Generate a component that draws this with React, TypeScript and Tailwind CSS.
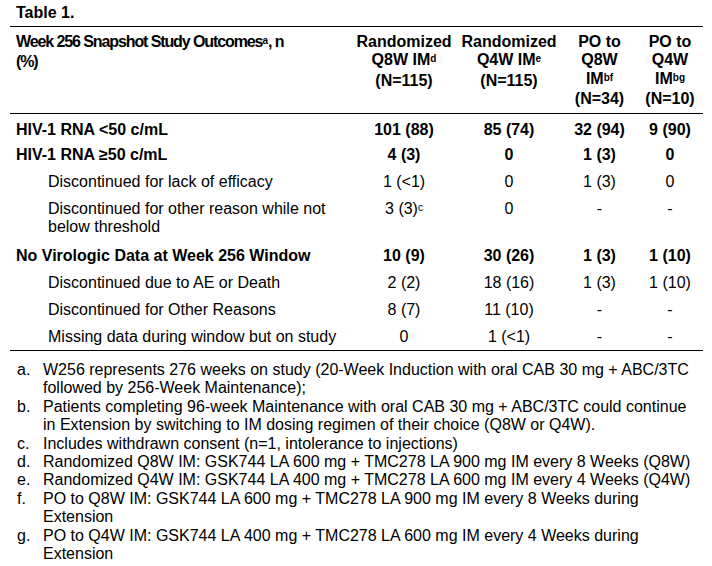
const headCols = [
  { lines: ["Randomized", "Q8W IM"], sup: "d", n: "(N=115)" },
  { lines: ["Randomized", "Q4W IM"], sup: "e", n: "(N=115)" },
  { lines: ["PO to", "Q8W", "IM"], sup: "bf", n: "(N=34)" },
  { lines: ["PO to", "Q4W", "IM"], sup: "bg", n: "(N=10)" },
];

type Row = {
  label: React.ReactNode;
  values: React.ReactNode[];
  bold?: boolean;
  indent?: boolean;
  pt: string;
};

const rows: Row[] = [
  { label: "HIV-1 RNA <50 c/mL", values: ["101 (88)", "85 (74)", "32 (94)", "9 (90)"], bold: true, pt: "pt-[7px]" },
  { label: "HIV-1 RNA \u226550 c/mL", values: ["4 (3)", "0", "1 (3)", "0"], bold: true, pt: "pt-[7.4px]" },
  { label: "Discontinued for lack of efficacy", values: ["1 (<1)", "0", "1 (3)", "0"], indent: true, pt: "pt-[8px]" },
  {
    label: (
      <>
        Discontinued for other reason while not
        <br />
        below threshold
      </>
    ),
    values: [
      <>
        3 (3)<Sup>c</Sup>
      </>,
      "0",
      "-",
      "-",
    ],
    indent: true,
    pt: "pt-[8.6px]",
  },
  {
    label: "No Virologic Data at Week 256 Window",
    values: ["10 (9)", "30 (26)", "1 (3)", "1 (10)"],
    bold: true,
    pt: "pt-[10px]",
  },
  { label: "Discontinued due to AE or Death", values: ["2 (2)", "18 (16)", "1 (3)", "1 (10)"], indent: true, pt: "pt-[8.6px]" },
  { label: "Discontinued for Other Reasons", values: ["8 (7)", "11 (10)", "-", "-"], indent: true, pt: "pt-[8.6px]" },
  { label: "Missing data during window but on study", values: ["0", "1 (<1)", "-", "-"], indent: true, pt: "pt-[8.6px]" },
];

const notes: [string, React.ReactNode][] = [
  [
    "a.",
    <>
      W256 represents 276 weeks on study (20-Week Induction with oral CAB 30 mg + ABC/3TC
      <br />
      followed by 256-Week Maintenance);
    </>,
  ],
  [
    "b.",
    <>
      Patients completing 96-week Maintenance with oral CAB 30 mg + ABC/3TC could continue
      <br />
      in Extension by switching to IM dosing regimen of their choice (Q8W or Q4W).
    </>,
  ],
  ["c.", "Includes withdrawn consent (n=1, intolerance to injections)"],
  ["d.", "Randomized Q8W IM: GSK744 LA 600 mg + TMC278 LA 900 mg IM every 8 Weeks (Q8W)"],
  ["e.", "Randomized Q4W IM: GSK744 LA 400 mg + TMC278 LA 600 mg IM every 4 Weeks (Q4W)"],
  [
    "f.",
    <>
      PO to Q8W IM: GSK744 LA 600 mg + TMC278 LA 900 mg IM every 8 Weeks during
      <br />
      Extension
    </>,
  ],
  [
    "g.",
    <>
      PO to Q4W IM: GSK744 LA 400 mg + TMC278 LA 600 mg IM every 4 Weeks during
      <br />
      Extension
    </>,
  ],
];

function Sup({ children }: { children: React.ReactNode }) {
  return <span className="relative top-[-3px] text-[10px] tracking-normal align-baseline">{children}</span>;
}

export default function App() {
  return (
    <div
      className="w-[712px] h-[566px] overflow-hidden bg-white text-black text-[16px] leading-[18.4px]"
      style={{ fontFamily: '"Liberation Sans", Arial, sans-serif' }}
    >
      <div className="pl-[16px] pt-[4px] pb-[3.6px] font-bold">Table 1.</div>

      <table className="ml-[10px] w-[693px] border-collapse table-fixed">
        <colgroup>
          <col className="w-[342px]" />
          <col className="w-[104px]" />
          <col className="w-[106px]" />
          <col className="w-[75px]" />
          <col className="w-[66px]" />
        </colgroup>
        <thead>
          <tr className="border-t border-b border-black font-bold align-top">
            <th className="pl-[6px] pr-[6px] pt-[6px] pb-[4px] text-left font-bold tracking-[-1.1px]">
              Week 256 Snapshot Study Outcomes<Sup>a</Sup>, n
              <br />
              (%)
            </th>
            {headCols.map((c, i) => (
              <th key={i} className="pt-[6px] pb-[4px] text-center font-bold">
                {c.lines.map((l, j) => (
                  <div key={j}>
                    {l}
                    {j === c.lines.length - 1 && <Sup>{c.sup}</Sup>}
                  </div>
                ))}
                <div>{c.n}</div>
              </th>
            ))}
          </tr>
        </thead>
        <tbody>
          {rows.map((r, i) => {
            const last = i === rows.length - 1;
            return (
              <tr key={i} className={`align-top ${r.bold ? "font-bold" : ""} ${last ? "border-b border-black" : ""}`}>
                <td className={`${r.indent ? "pl-[38px]" : "pl-[6px]"} pr-[6px] ${r.pt} ${last ? "pb-[4px]" : ""}`}>
                  {r.label}
                </td>
                {r.values.map((v, j) => (
                  <td key={j} className={`text-center ${r.pt}`}>
                    {v}
                  </td>
                ))}
              </tr>
            );
          })}
        </tbody>
      </table>

      <ol className="pt-[10px]">
        {notes.map(([k, t]) => (
          <li key={k} className="flex">
            <span className="w-[43px] shrink-0 pl-[17px]">{k}</span>
            <span className="whitespace-nowrap">{t}</span>
          </li>
        ))}
      </ol>
    </div>
  );
}
